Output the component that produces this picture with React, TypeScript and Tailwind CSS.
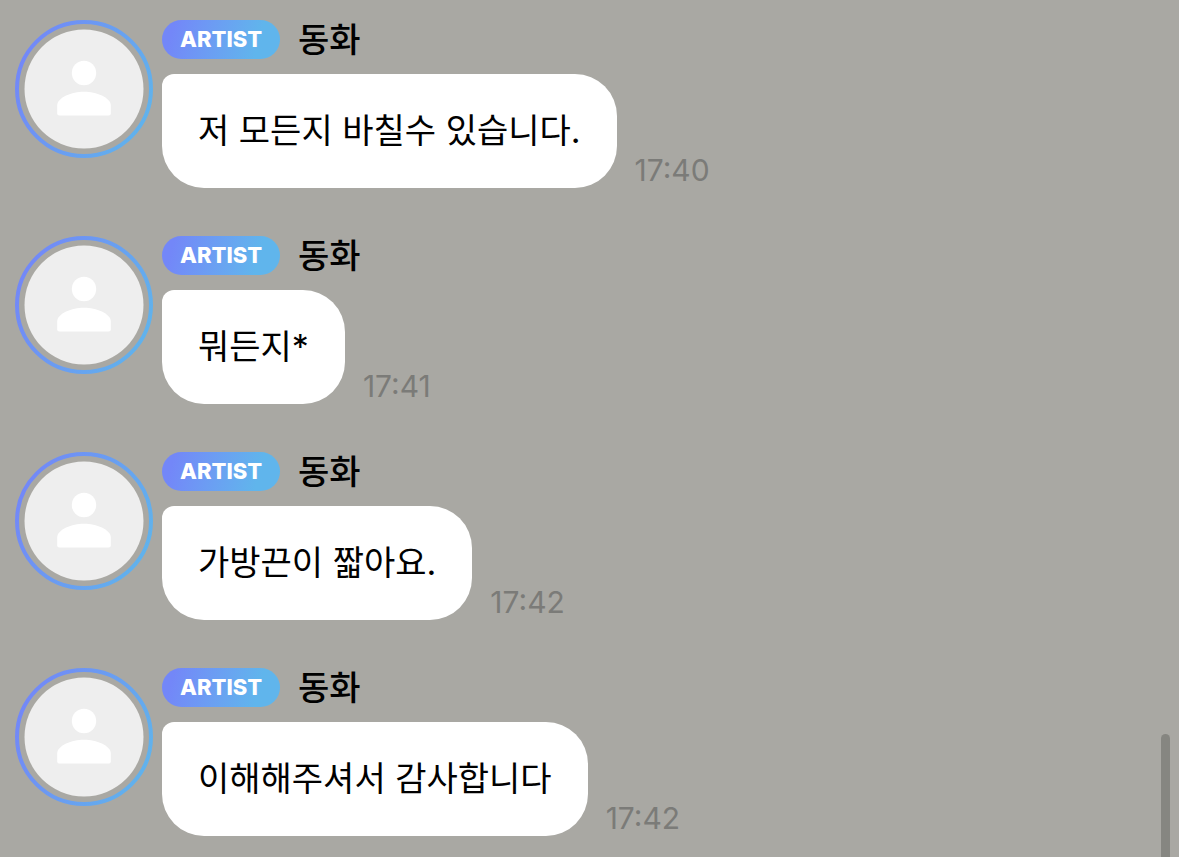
import React from 'react';

interface Message {
  id: number;
  author: string;
  text: string;
  time: string;
}

const messages: Message[] = [
  { id: 1, author: '동화', text: '저 모든지 바칠수 있습니다.', time: '17:40' },
  { id: 2, author: '동화', text: '뭐든지*', time: '17:41' },
  { id: 3, author: '동화', text: '가방끈이 짧아요.', time: '17:42' },
  { id: 4, author: '동화', text: '이해해주셔서 감사합니다', time: '17:42' },
];

const Avatar: React.FC<{ id: number }> = ({ id }) => (
  <svg viewBox="0 0 138 138" className="size-[138px] shrink-0" aria-hidden="true">
    <defs>
      <linearGradient id={`ring-${id}`} x1="0" y1="0.3" x2="1" y2="0.7">
        <stop offset="0" stopColor="#7387f8" />
        <stop offset="1" stopColor="#60b3ec" />
      </linearGradient>
    </defs>
    <circle cx="69" cy="69" r="67" fill="none" stroke={`url(#ring-${id})`} strokeWidth="4" />
    <circle cx="69" cy="69" r="59.5" fill="#eeeeee" />
    <circle cx="69" cy="53" r="12.2" fill="#ffffff" />
    <path
      d="M42.2 85.5C42.2 77.5 57 71.8 69 71.8s26.8 5.7 26.8 13.7v8q0 2-2 2H44.2q-2 0-2-2z"
      fill="#ffffff"
    />
  </svg>
);

const MessageRow: React.FC<{ message: Message }> = ({ message }) => (
  <li className="flex items-start gap-[9px]">
    <Avatar id={message.id} />
    <div className="min-w-0">
      <div className="flex h-[39px] items-center gap-[18px]">
        <span className="flex h-full items-center rounded-full bg-linear-105 from-[#7387f8] from-10% to-[#60b5ec] to-80% px-[18px] text-[22px] font-extrabold text-white">
          ARTIST
        </span>
        <span className="text-[34px] leading-[39px] font-medium text-black">{message.author}</span>
      </div>

      <div className="mt-[15px] flex items-end gap-[18px]">
        <p className="rounded-[42px] rounded-tl-[12px] bg-white p-9 text-[34px] leading-[42px] text-black">
          {message.text}
        </p>
        <time className="text-[30px] leading-[36px] text-[#7b7b78]">{message.time}</time>
      </div>
    </div>
  </li>
);

const App: React.FC = () => {
  return (
    <main className="min-h-screen bg-[#a9a8a3] pt-5 pr-10 pb-5 pl-[15px] font-['Inter','Noto_Sans_CJK_KR',sans-serif]">
      <ul className="flex flex-col gap-12">
        {messages.map((message) => (
          <MessageRow key={message.id} message={message} />
        ))}
      </ul>

      {/* Scroll indicator */}
      <div className="fixed right-[9px] bottom-0 h-[123px] w-[9px] rounded-t-full bg-[#868681]"></div>
    </main>
  );
};

export default App;
